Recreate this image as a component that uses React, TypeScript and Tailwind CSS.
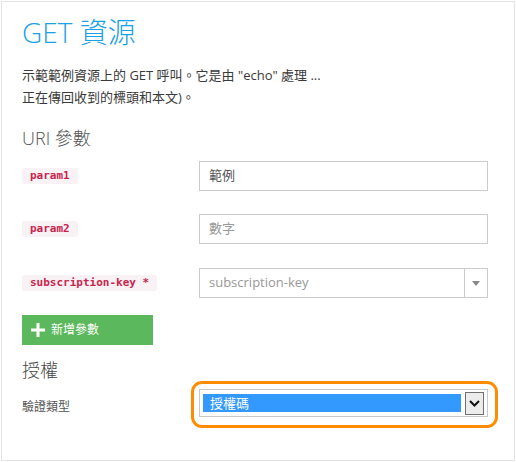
import React from "react";

const sans = "font-['Open_Sans','Noto_Sans_CJK_TC',sans-serif]";

function Badge({ children }: { children: React.ReactNode }) {
  return (
    <span className="flex items-center h-[16px] px-[8px] bg-[#f9f2f4] text-[#c7254e] text-[11px] font-bold font-['DejaVu_Sans_Mono',monospace] whitespace-pre rounded-[2px]">
      {children}
    </span>
  );
}

export default function App() {
  return (
    <div className={`w-[516px] h-[462px] bg-white p-px ${sans}`}>
      <div className="h-[460px] w-[514px] border border-[#e3e3e3] pl-[20px] flex flex-col">
        <h1 className="mt-[12px] text-[28px] leading-[36px] font-light text-[#1ba1e2]">
          GET 資源
        </h1>
        <p className="mt-[14px] text-[13px] leading-[22px] text-[#3a3a3a]">
          示範範例資源上的 GET 呼叫。它是由 "echo" 處理 ...
          <br />
          正在傳回收到的標頭和本文)。
        </p>
        <h2 className="mt-[18px] text-[18px] leading-[24px] font-light text-[#555]">
          URI 參數
        </h2>

        <div className="mt-[11px] flex items-center h-[30px]">
          <div className="w-[177px] flex items-center">
            <Badge>param1</Badge>
          </div>
          <div className="w-[289px] h-[30px] border border-[#cccccc] flex items-center px-[9px] text-[13px] text-[#555]">
            範例
          </div>
        </div>

        <div className="mt-[23px] flex items-center h-[30px]">
          <div className="w-[177px] flex items-center">
            <Badge>param2</Badge>
          </div>
          <div className="w-[289px] h-[30px] border border-[#cccccc] flex items-center px-[9px] text-[13px] text-[#999]">
            數字
          </div>
        </div>

        <div className="mt-[24px] flex items-center h-[30px]">
          <div className="w-[177px] flex items-center">
            <Badge>subscription-key *</Badge>
          </div>
          <div className="w-[289px] h-[30px] border border-[#cccccc] flex items-stretch text-[13px] text-[#999]">
            <div className="flex-1 flex items-center px-[9px]">subscription-key</div>
            <div className="w-[23px] border-l border-[#cccccc] flex items-center justify-center">
              <svg width="8" height="5" viewBox="0 0 8 5">
                <path d="M0 0 L8 0 L4 5 Z" fill="#888" />
              </svg>
            </div>
          </div>
        </div>

        <button className="mt-[17px] w-[131px] h-[30px] bg-[#5cb85c] flex items-center pl-[9px] gap-[6px] text-white text-[12px]">
          <svg width="14" height="14" viewBox="0 0 14 14">
            <path d="M7 0 V14 M0 7 H14" stroke="white" strokeWidth="3" />
          </svg>
          <span>新增參數</span>
        </button>

        <h2 className="mt-[13px] text-[18px] leading-[24px] font-light text-[#444]">
          授權
        </h2>

        <div className="mt-[7px] flex items-center h-[28px]">
          <div className="w-[177px] pt-[8px] text-[12px] leading-[18px] text-[#555]">
            驗證類型
          </div>
          <div className="relative">
            <div className="w-[289px] h-[28px] border border-[#c8c8c8] flex items-center pl-[3px] pr-[3px] gap-[4px]">
              <div className="flex-1 h-[18px] bg-[#3399ff] text-white text-[13px] leading-[18px] pl-[7px]">
                授權碼
              </div>
              <div className="w-[19px] h-[23px] border border-[#707070] bg-[#ececec] flex items-center justify-center">
                <svg width="11" height="7" viewBox="0 0 11 7">
                  <path d="M1 1 L5.5 5.5 L10 1" stroke="#111" strokeWidth="2" fill="none" />
                </svg>
              </div>
            </div>
            <div className="absolute left-[-8px] right-[-10px] top-[-8px] bottom-[-11px] rounded-[11px] border-[3px] border-[#ff8c00] pointer-events-none" />
          </div>
        </div>
      </div>
    </div>
  );
}
